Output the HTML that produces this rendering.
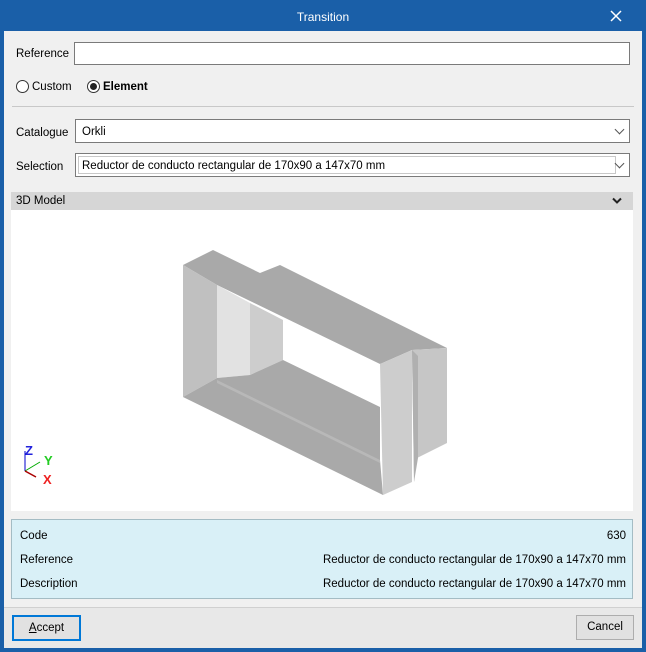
<!DOCTYPE html>
<html><head><meta charset="utf-8"><style>
*{margin:0;padding:0;box-sizing:border-box}
body{width:646px;height:652px;background:#1a5fa8;font-family:"Liberation Sans",sans-serif;font-size:11.5px;color:#000;position:relative;overflow:hidden}
.a{position:absolute}
.title{left:0;top:0;width:646px;height:31px;color:#fff;text-align:center;line-height:34px;font-size:12px}
.body{left:4px;top:31px;width:638px;height:617px;background:#f0f0f0}
.lbl{line-height:14px;white-space:nowrap}
.box{background:#fff;border:1px solid #7a7a7a}
.chev{width:7px;height:7px;border-right:1px solid #555;border-bottom:1px solid #555;transform:rotate(45deg)}
.radio{width:13px;height:13px;border:1px solid #333;border-radius:50%;background:#fff}
.btn{background:#e1e1e1;border:1px solid #adadad;text-align:center;line-height:23px}
</style></head><body>
<div class="a title">Transition</div>
<svg class="a" style="left:610px;top:10px" width="12" height="12"><path d="M1 1L11 11M11 1L1 11" stroke="#fff" stroke-width="1.5"/></svg>
<div class="a body"></div>
<div class="a lbl" style="left:16px;top:47px">Reference</div>
<div class="a box" style="left:74px;top:42px;width:556px;height:23px"></div>
<div class="a radio" style="left:16px;top:80px"></div>
<div class="a lbl" style="left:32px;top:80px">Custom</div>
<div class="a radio" style="left:87px;top:80px"></div>
<div class="a" style="left:90px;top:83px;width:7px;height:7px;border-radius:50%;background:#222"></div>
<div class="a lbl" style="left:103px;top:80px;font-weight:bold">Element</div>
<div class="a" style="left:12px;top:106px;width:622px;height:1px;background:#c8c8c8"></div>
<div class="a lbl" style="left:16px;top:126px">Catalogue</div>
<div class="a box" style="left:75px;top:119px;width:555px;height:24px"></div>
<div class="a lbl" style="left:82px;top:125px">Orkli</div>
<div class="a chev" style="left:616px;top:126px"></div>
<div class="a lbl" style="left:16px;top:160px">Selection</div>
<div class="a box" style="left:75px;top:153px;width:555px;height:24px"></div>
<div class="a" style="left:78px;top:156px;width:538px;height:18px;border:1px solid #c8c8c8"></div>
<div class="a lbl" style="left:82px;top:159px">Reductor de conducto rectangular de 170x90 a 147x70 mm</div>
<div class="a chev" style="left:616px;top:160px"></div>
<div class="a" style="left:11px;top:192px;width:622px;height:18px;background:#d6d6d6"></div>
<div class="a lbl" style="left:16px;top:194px">3D Model</div>
<svg class="a" style="left:612px;top:197px" width="10" height="8"><path d="M1 1.5L5 5.5L9 1.5" stroke="#222" stroke-width="2" fill="none"/></svg>
<div class="a" style="left:11px;top:210px;width:622px;height:301px;background:#fff"></div>
<svg class="a" style="left:0;top:0" width="646" height="652">
<polygon points="183,265 213,250 260,273 280,265 447,348 412,350 380,364 217,285" fill="#a9a9a9"/>
<polygon points="183,265 217,285 217,378 183,397" fill="#c0c0c0"/>
<polygon points="217,285 250,303 250,375 217,378" fill="#e2e2e2"/>
<polygon points="250,303 283,320 283,360 250,375" fill="#cdcdcd"/>
<polygon points="183,397 217,378 250,375 283,360 380,407 380,460 383,495" fill="#a9a9a9"/>
<polygon points="217,380 380,460 380,463 217,383" fill="#b8b8b8"/>
<polygon points="380,364 412,350 412,482 383,495" fill="#cdcdcd"/>
<polygon points="412,350 447,348 447,443 417,458 414,482" fill="#c6c6c6"/>
<polygon points="412,350 418,356 418,458 414,482" fill="#b0b0b0"/>
<path d="M25 471V451" stroke="#00c" stroke-width="1"/>
<path d="M25 471L40 462" stroke="#0a0" stroke-width="1"/>
<path d="M25 471L36 477" stroke="#a00" stroke-width="1.5"/>
<text x="25" y="455" font-family="Liberation Sans" font-weight="bold" font-size="13" fill="#22d">Z</text>
<text x="44" y="465" font-family="Liberation Sans" font-weight="bold" font-size="13" fill="#2c2">Y</text>
<text x="43" y="484" font-family="Liberation Sans" font-weight="bold" font-size="13" fill="#e22">X</text>
</svg>
<div class="a" style="left:11px;top:519px;width:622px;height:80px;background:#d9f0f7;border:1px solid #a4bcc4"></div>
<div class="a lbl" style="left:20px;top:529px">Code</div>
<div class="a lbl" style="right:20px;top:529px">630</div>
<div class="a lbl" style="left:20px;top:553px">Reference</div>
<div class="a lbl" style="right:20px;top:553px">Reductor de conducto rectangular de 170x90 a 147x70 mm</div>
<div class="a lbl" style="left:20px;top:577px">Description</div>
<div class="a lbl" style="right:20px;top:577px">Reductor de conducto rectangular de 170x90 a 147x70 mm</div>
<div class="a" style="left:4px;top:607px;width:638px;height:41px;background:#e8e8e8;border-top:1px solid #d0d0d0"></div>
<div class="a btn" style="left:12px;top:615px;width:69px;height:26px;border:2px solid #0078d7;line-height:22px"><u>A</u>ccept</div>
<div class="a btn" style="left:576px;top:615px;width:58px;height:25px">Cancel</div>
</body></html>
